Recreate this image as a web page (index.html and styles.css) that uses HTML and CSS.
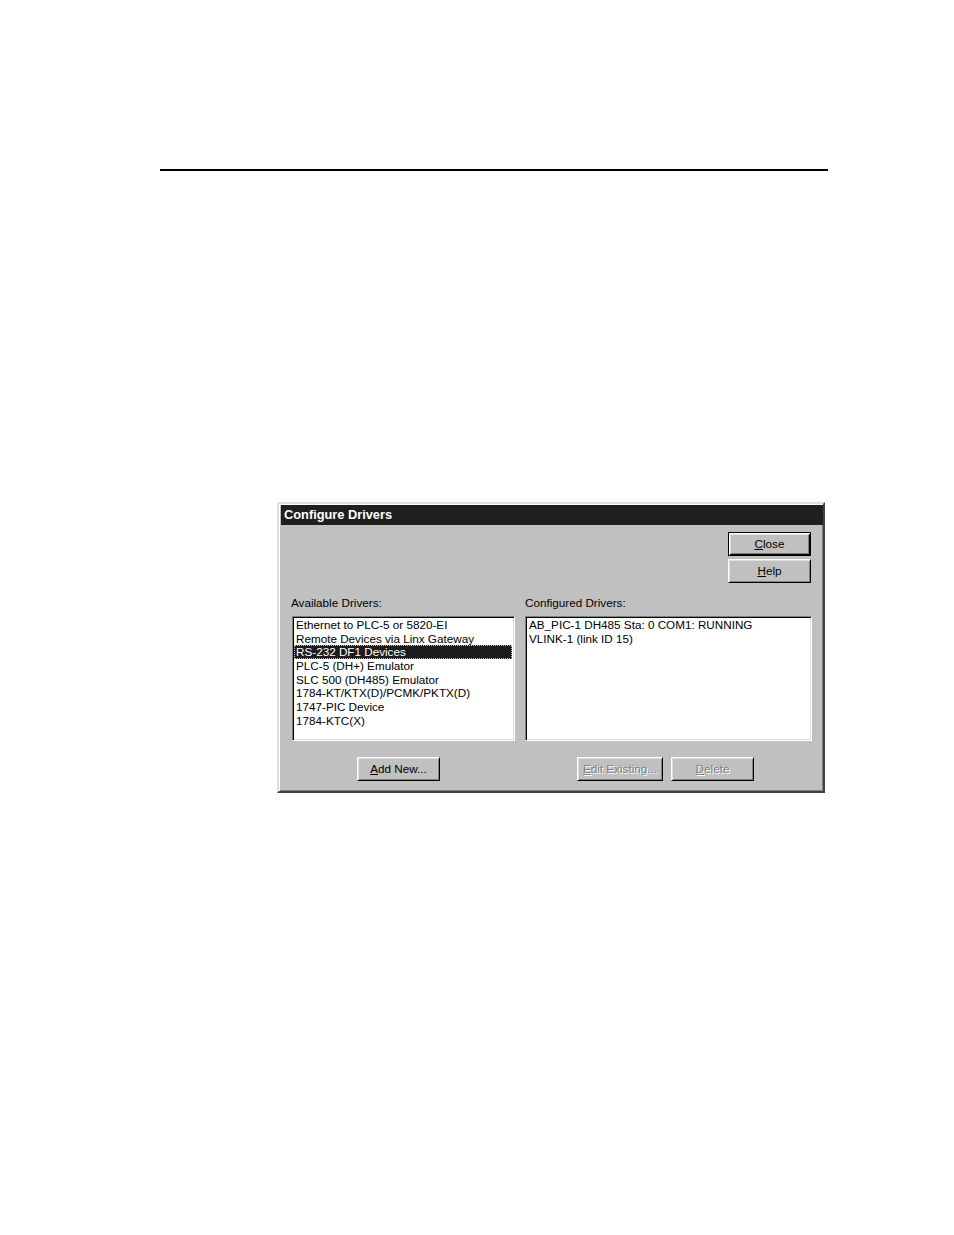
FILE: index.html
```html
<!DOCTYPE html>
<html>
<head>
<meta charset="utf-8">
<link rel="stylesheet" href="styles.css">
</head>
<body>
<div class="rule"></div>
<div class="dialog">
  <div class="titlebar">Configure Drivers</div>
  <div class="content">
    <div class="top-buttons">
      <div class="btn default"><span class="btn-face"><u>C</u>lose</span></div>
      <div class="btn"><span class="btn-face"><u>H</u>elp</span></div>
    </div>
    <div class="columns">
      <div class="col">
        <div class="label">Available Drivers:</div>
        <div class="list left-list">
          <div class="item">Ethernet to PLC-5 or 5820-EI</div>
          <div class="item">Remote Devices via Linx Gateway</div>
          <div class="item selected">RS-232 DF1 Devices</div>
          <div class="item">PLC-5 (DH+) Emulator</div>
          <div class="item">SLC 500 (DH485) Emulator</div>
          <div class="item">1784-KT/KTX(D)/PCMK/PKTX(D)</div>
          <div class="item">1747-PIC Device</div>
          <div class="item">1784-KTC(X)</div>
        </div>
        <div class="bottom-buttons left-buttons">
          <div class="btn add"><span class="btn-face"><u>A</u>dd New...</span></div>
        </div>
      </div>
      <div class="col">
        <div class="label right-label">Configured Drivers:</div>
        <div class="list right-list">
          <div class="item">AB_PIC-1 DH485 Sta: 0 COM1: RUNNING</div>
          <div class="item">VLINK-1 (link ID 15)</div>
        </div>
        <div class="bottom-buttons right-buttons">
          <div class="btn disabled edit"><span class="btn-face"><u>E</u>dit Existing...</span></div>
          <div class="btn disabled"><span class="btn-face"><u>D</u>elete</span></div>
        </div>
      </div>
    </div>
  </div>
</div>
</body>
</html>
```
FILE: styles.css
```css
html, body {
  margin: 0;
  padding: 0;
  background: #ffffff;
}

body {
  font-family: "Liberation Sans", Arial, sans-serif;
  font-size: 11.7px;
  color: #000;
}

.rule {
  margin: 169px 0 0 160px;
  width: 668px;
  height: 2px;
  background: #000;
}

.dialog {
  box-sizing: border-box;
  margin: 331px 0 0 277px;
  width: 548px;
  height: 291px;
  background: #c0c0c0;
  border-style: solid;
  border-width: 2px;
  border-color: #dfdfdf #404040 #404040 #dfdfdf;
  box-shadow: inset 1px 1px 0 #ffffff, inset -1px -1px 0 #808080;
  padding: 1px 0 1px 2px;
}

.titlebar {
  height: 20px;
  line-height: 20px;
  background: #1f1f1f;
  color: #ffffff;
  font-weight: bold;
  font-size: 12.8px;
  padding-left: 3px;
}

.content {
  padding: 7px 12px 0 11px;
}

.top-buttons {
  display: flex;
  flex-direction: column;
  align-items: flex-end;
  gap: 3px;
}

.btn {
  box-sizing: border-box;
  width: 83px;
  height: 24px;
  background: #c0c0c0;
  border-style: solid;
  border-width: 1px;
  border-color: #ffffff #000000 #000000 #ffffff;
  box-shadow: inset 1px 1px 0 #dfdfdf, inset -1px -1px 0 #808080;
  display: flex;
  align-items: center;
  justify-content: center;
}

.btn.default {
  border: 1px solid #000;
  box-shadow: inset 1px 1px 0 #ffffff, inset -1px -1px 0 #000000, inset 2px 2px 0 #dfdfdf, inset -2px -2px 0 #808080;
}

.btn-face {
  line-height: 14px;
  white-space: nowrap;
}

.btn.disabled .btn-face {
  color: #808080;
  text-shadow: 1px 1px 0 #ffffff;
}

.btn.disabled .btn-face u {
  text-decoration-color: #808080;
}

.columns {
  display: flex;
  gap: 10px;
  margin-top: 13px;
}

.col {
  display: flex;
  flex-direction: column;
}

.label {
  height: 14px;
  line-height: 14px;
  margin: 0 0 6px -1px;
}

.label.right-label {
  margin-left: 0;
}

.list {
  box-sizing: border-box;
  height: 125px;
  background: #ffffff;
  border-style: solid;
  border-width: 1px;
  border-color: #808080 #ffffff #ffffff #808080;
  box-shadow: inset 1px 1px 0 #000000, inset -1px -1px 0 #dfdfdf;
  padding: 1px 2px 2px 1px;
}

.left-list {
  width: 223px;
}

.right-list {
  width: 287px;
}

.item {
  height: 13.7px;
  line-height: 13.7px;
  padding-left: 2px;
  white-space: nowrap;
}

.item.selected {
  box-sizing: border-box;
  background: #1c1c1c;
  color: #ffffff;
  outline: 1px dotted #c0c0c0;
  outline-offset: -1px;
}

.bottom-buttons {
  display: flex;
  gap: 8px;
  margin-top: 16px;
}

.left-buttons {
  padding-left: 65px;
}

.right-buttons {
  padding-left: 52px;
}

.btn.edit {
  width: 86px;
}
```
